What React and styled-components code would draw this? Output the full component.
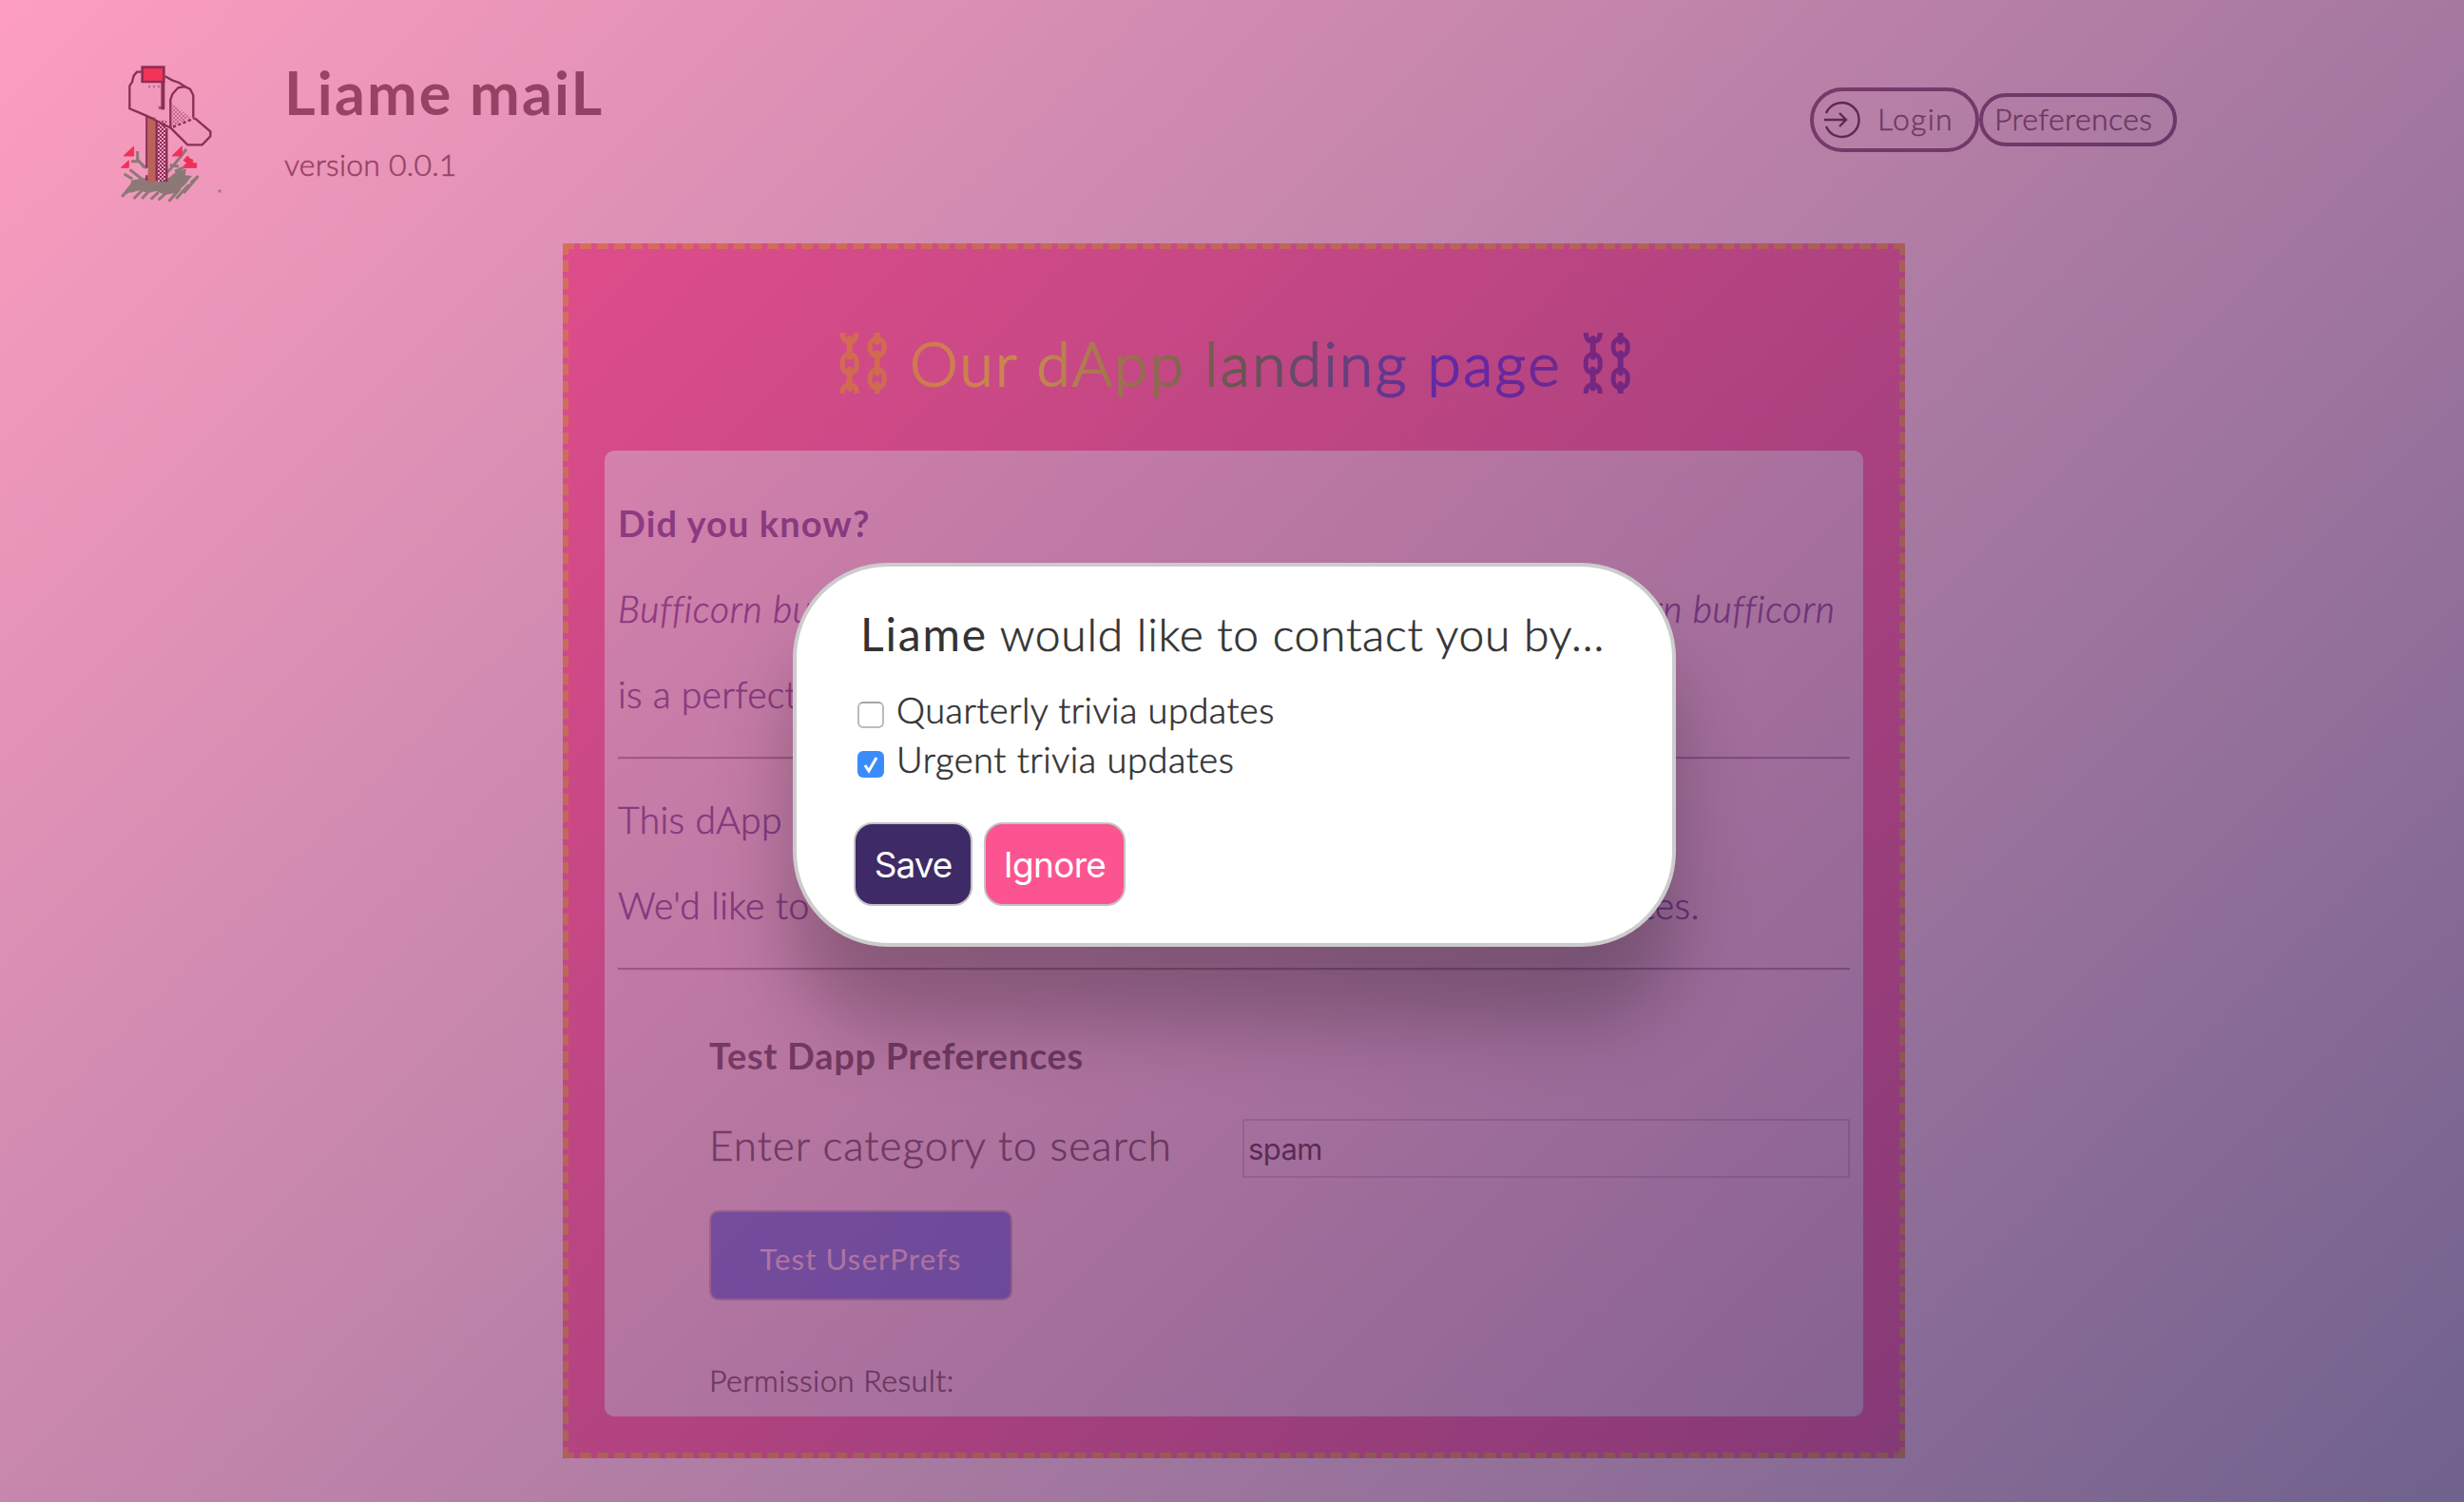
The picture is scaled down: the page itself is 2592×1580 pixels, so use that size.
import React from "react";
import styled, { createGlobalStyle } from "styled-components";

const ink = "#333";
const plum = "#482a80";
const text = '"Lato", "Open Sans", sans-serif';
const system = '"Inter", "Liberation Sans", sans-serif';

const GlobalStyle = createGlobalStyle`
  * { box-sizing: border-box; }
  body { margin: 0; background: #fff; color: ${ink}; font-family: ${text}; font-weight: 300; }
  h1, h2, h3, p { margin: 0; }
`;

const Page = styled.div`
  position: relative;
  display: flex;
  flex-direction: column;
  align-items: center;
  width: 2592px;
  height: 1580px;
  overflow: hidden;
`;

const Header = styled.header`
  display: flex;
  align-self: stretch;
  height: 256px;
  padding: 55px 302px 0 110px;
`;

const Logo = styled.svg`
  width: 130px;
  height: 160px;
  flex: none;
`;

const Brand = styled.div`
  margin-left: 59px;
  padding-top: 2px;
  flex: 1;
`;

const Line = styled.p`
  font-size: ${(p) => p.$size}px;
  line-height: ${(p) => p.$height}px;
  font-weight: ${(p) => p.$weight || 300};
  letter-spacing: ${(p) => p.$track || 0}px;
  font-style: ${(p) => (p.$italic ? "italic" : "normal")};
  color: ${(p) => p.$color || "inherit"};
  -webkit-text-stroke: ${(p) => (p.$weight ? 0 : 0.6)}px currentColor;
  white-space: nowrap;
`;

const Nav = styled.nav`
  display: flex;
  align-items: center;
  height: 142px;
`;

const Pill = styled.button`
  display: flex;
  align-items: center;
  gap: 17px;
  width: ${(p) => p.$width}px;
  height: ${(p) => p.$height}px;
  padding: 0 0 0 ${(p) => p.$inset}px;
  border: 4px solid #403450;
  border-radius: 34px;
  background: transparent;
  color: ${ink};
  font: 300 32px ${text};
  letter-spacing: ${(p) => p.$track}px;
  -webkit-text-stroke: 0.5px currentColor;
`;

const PillText = styled.span`
  padding-bottom: 4px;
`;

const Card = styled.main`
  width: 1412px;
  height: 1278px;
  margin-left: 4px;
  padding: 0 38px;
  border: 6px dashed #eaa61e;
  background: #fb5292;
  display: flex;
  flex-direction: column;
`;

const Title = styled.h1`
  display: flex;
  align-items: center;
  justify-content: center;
  gap: 22px;
  height: 212px;
  padding: 28px 0 0 4px;
  font-weight: 300;
  font-size: 64px;
  white-space: nowrap;
`;

const TitleText = styled.span`
  line-height: 90px;
  letter-spacing: ${(p) => p.$track}px;
  background: linear-gradient(to right, red, orange, yellow, green, blue, indigo, violet);
  background-size: 1324px 100%;
  background-position: -318px 0;
  -webkit-background-clip: text;
  background-clip: text;
  color: transparent;
  -webkit-text-stroke: 1.8px transparent;
`;

const Chain = styled.svg`
  width: 52px;
  height: 64px;
  fill: none;
  stroke: ${(p) => p.$color};
`;

const Panel = styled.section`
  height: 1016px;
  padding: 31px 14px 0;
  border-radius: 10px;
  background: #f5e0ee;
`;

const Rule = styled.hr`
  height: 3px;
  margin: 21px 0 18px;
  border: 0;
  border-top: 2px solid #937c9c;
  border-bottom: 1px solid #dccbdc;
`;

const Form = styled.div`
  padding: 26px 0 0 96px;
`;

const Field = styled.label`
  display: flex;
  align-items: center;
  justify-content: space-between;
  height: 62px;
  margin-top: 22px;
`;

const FieldName = styled(Line)`
  padding-bottom: 8px;
`;

const Input = styled.input`
  width: 639px;
  height: 62px;
  padding: 2px 4px;
  border: 2px solid #c9b2c8;
  background: transparent;
  color: #111;
  font: 400 31px ${system};
  letter-spacing: -0.6px;
`;

const TestButton = styled.button`
  display: block;
  width: 319px;
  height: 95px;
  margin: 34px 0 64px;
  padding: 6px 0 0;
  border: 2px solid #b79db2;
  border-radius: 10px;
  background: royalblue;
  color: #f5e0ee;
  font: 400 31px ${text};
  letter-spacing: 1.2px;
`;

const Overlay = styled.div`
  position: absolute;
  inset: 0;
  display: flex;
  justify-content: center;
  align-items: flex-start;
  padding: 592px 0 0 5px;
  background: linear-gradient(135deg, rgba(251, 84, 144, 0.57), rgba(62, 42, 102, 0.74));
`;

const Modal = styled.div`
  width: 929px;
  height: 404px;
  padding: 39px 60px 0;
  border: 4px solid #ccc;
  border-radius: 100px;
  background: #fff;
  box-shadow: 0 80px 80px rgba(0, 0, 0, 0.25);
`;

const Question = styled(Line)`
  margin: 0 0 22px 7px;

  b {
    letter-spacing: 1.8px;
    -webkit-text-stroke: 0;
  }
`;

const Option = styled.label`
  display: flex;
  align-items: center;
  gap: 13px;
  height: 52px;
  padding-left: 4px;
`;

const OptionName = styled(Line)`
  padding-bottom: 3px;
`;

const Box = styled.span`
  display: flex;
  align-items: center;
  justify-content: center;
  width: 28px;
  height: 28px;
  margin-top: 10px;
  border: ${(p) => (p.$checked ? 0 : 2)}px solid #bbb;
  border-top-color: #a5a5a5;
  border-radius: 6px;
  background: ${(p) => (p.$checked ? "#3b8cfb" : "#fff")};
`;

const Actions = styled.div`
  display: flex;
  gap: 12px;
  margin-top: 40px;
`;

const Action = styled.button`
  width: ${(p) => p.$width}px;
  height: 88px;
  padding: 0;
  border: 2px solid #c4c4c4;
  border-radius: 20px;
  background: ${(p) => p.$fill};
  color: #fff;
  font: 400 37px ${system};
  letter-spacing: ${(p) => p.$track}px;
`;

function Mailbox() {
  return (
    <Logo viewBox="0 0 390 480" strokeWidth="7" stroke="#0a0008" fill="none">
      <defs>
        <pattern id="grain" width="12" height="12" patternUnits="userSpaceOnUse">
          <path d="M0 0h6v6h-6zM6 6h6v6h-6z" fill="#0a0008" stroke="none" />
        </pattern>
      </defs>
      <g stroke="#0eb25a" strokeWidth="9">
        <path d="M84 404l46-8 40 14 30-12 30-24 28-6-4 20 22 2-24 30-30 24-30 6-30-12-24 6-28-8-30 8z" fill="#0eb25a" stroke="none" />
        <path d="M55 456l40-50M66 446l40-30M92 462l30-30M118 462l22-24M146 464l24-22M170 466l26-24M203 470l36-40M226 462l40-44M250 444l44-52M272 412l24-22M62 384l26 16M80 370l40 32M104 312v26l22 26M84 344h24l24 22M258 306l-22 28-26 32-14 14M206 356l28 4M222 376l34-16" />
        <path d="M359 438h8" />
      </g>
      <path d="M137 205h25v205h-25z" fill="#7a7e14" stroke="none" />
      <path d="M163 215h33v194h-33z" fill="url(#grain)" stroke="none" />
      <path d="M133 200v165M133 388v16M164 214v190M196 240v168" />
      <path d="M79 178V105l20-43h92l79 50 10 96-64 30z" fill="#e8f4ee" opacity=".22" stroke="none" />
      <path d="M208 238l54 54h46l26-27v-15l-49-42z" fill="#e8f4ee" opacity=".22" stroke="none" />
      <path d="M116 62h-14l-10 12-5 20-8 12v72l30 12 40 18 40 22 19 8V150l6-18 18-20 20-4 18 8 10 20v70" />
      <path d="M191 76l22 12 22 8 22 14M208 238l54 54h46l26-27v-15l-49-42" />
      <path d="M216 236l68-28" strokeDasharray="10 7" />
      <path d="M214 162l56 44-56 28z" fill="url(#grain)" opacity=".45" stroke="none" />
      <path d="M119 47h68v46h-68z" fill="#fc0713" strokeWidth="8" />
      <path d="M184 95v86" strokeWidth="12" />
      <path d="M170 175h14" strokeWidth="9" opacity=".7" />
      <path d="M138 108h36" strokeDasharray="6 9" opacity=".5" />
      <path d="M92 297v30H60zM76 342v22H52zM244 297v30h-31zM262 327l8 10 8 2v11h12v14h-37v-9l8-5-12-9z" fill="#fc0713" stroke="#fc0713" strokeWidth="3" />
    </Logo>
  );
}

function Chains({ color }) {
  return (
    <Chain $color={color} viewBox="0 0 52 64" strokeWidth="5">
      <path d="M3.2 0c0 6 2.5 9.300 7.500 9.300s7.500-3.300 7.500-9.300M3.200 64c0-6 2.500-9.300 7.500-9.300s7.500 3.300 7.500 9.300" />
      <rect x="3.200" y="22.500" width="15" height="20" rx="7.500" />
      <rect x="32.200" y="6" width="15" height="18.500" rx="7.500" />
      <rect x="32.200" y="38.500" width="15" height="19.500" rx="7.500" />
      <path d="M10.700 6v19.500M10.700 38.500v20M39.700 0v9.500M39.700 21.500v21M39.700 54v10" strokeWidth="6" strokeLinecap="round" />
    </Chain>
  );
}

export default function App() {
  return (
    <Page>
      <GlobalStyle />
      <Header>
        <Mailbox />
        <Brand>
          <Line as="h2" $size={63} $height={80} $weight={700} $track={2.1}>Liame maiL</Line>
          <Line $size={32} $height={71} $track={0.2}>version 0.0.1</Line>
        </Brand>
        <Nav>
          <Pill $width={178} $height={68} $inset={10} $track={1.3}>
            <svg width="40" height="40" viewBox="0 0 40 40" fill="none" stroke="#000" strokeWidth="2.4">
              <path d="M3 13a18 18 0 1 1 0 14M1 20h23M17 13l7 7-7 7" />
            </svg>
            <PillText>Login</PillText>
          </Pill>
          <Pill $width={208} $height={56} $inset={12} $track={0.4}>
            <PillText>Preferences</PillText>
          </Pill>
        </Nav>
      </Header>
      <Card>
        <Title>
          <Chains color="#ffaa00" />
          <TitleText $track={2.4}>Our dApp landing page</TitleText>
          <Chains color="#400090" />
        </Title>
        <Panel>
          <Line as="h3" $size={38} $height={90} $weight={700} $track={1.1} $color={plum}>Did you know?</Line>
          <Line $size={39} $height={90} $track={0.78} $italic $color={plum}>
            Bufficorn bufficorn Bufficorn bufficorn bufficorn bufficorn Bufficorn bufficorn
          </Line>
          <Line $size={39} $height={90} $track={0.3} $color={plum}>is a perfectly valid sentence.</Line>
          <Rule />
          <Line $size={39} $height={90} $track={0.4} $color={plum}>This dApp is all about trivia.</Line>
          <Line $size={39} $height={90} $track={0.4} $color={plum}>
            We'd like to contact you about quarterly and urgent trivia updates.
          </Line>
          <Rule />
          <Form>
            <Line as="h3" $size={38} $height={90} $weight={700} $track={0.7}>Test Dapp Preferences</Line>
            <Field>
              <FieldName as="span" $size={44} $height={62} $track={1.05}>Enter category to search</FieldName>
              <Input defaultValue="spam" />
            </Field>
            <TestButton>Test UserPrefs</TestButton>
            <Line $size={32} $height={40} $track={0.5}>Permission Result:</Line>
          </Form>
        </Panel>
      </Card>
      <Overlay>
        <Modal>
          <Question $size={48} $height={64} $track={0.75}><b>Liame</b> would like to contact you by…</Question>
          <Option>
            <Box />
            <OptionName as="span" $size={38} $height={52} $track={0.47}>Quarterly trivia updates</OptionName>
          </Option>
          <Option>
            <Box $checked>
              <svg width="20" height="20" viewBox="0 0 20 20" fill="none" stroke="#fff" strokeWidth="3">
                <path d="M4 11l4 6 8-14" />
              </svg>
            </Box>
            <OptionName as="span" $size={38} $height={52} $track={0.55}>Urgent trivia updates</OptionName>
          </Option>
          <Actions>
            <Action $width={125} $fill="#3e2a66" $track={-1}>Save</Action>
            <Action $width={149} $fill="#fb5490" $track={-0.7}>Ignore</Action>
          </Actions>
        </Modal>
      </Overlay>
    </Page>
  );
}
